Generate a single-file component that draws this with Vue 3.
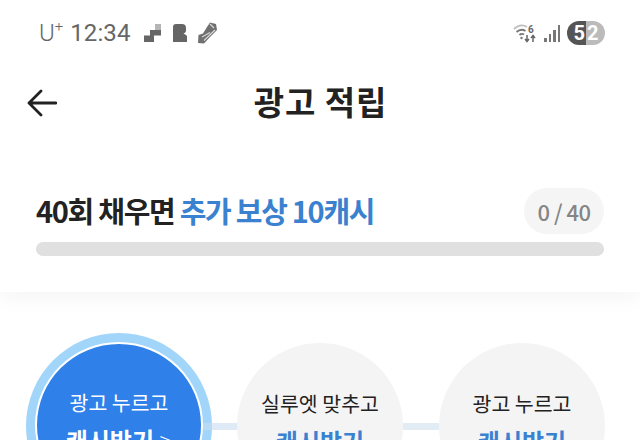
<template>
  <div class="page">
    <section class="top-card">
      <div class="status-bar">
        <div class="status-left">
          <span class="carrier">U<sup>+</sup></span>
          <span class="clock">12:34</span>
          <svg class="noti" width="18" height="18" viewBox="0 0 18 18">
            <path d="M1 18V11.500H7V6H12V0H18V11.500H11V18Z" fill="#666" />
            <path d="M12 0H18V6H12Z" fill="#b5b5b5" />
          </svg>
          <svg class="noti second" width="16" height="18" viewBox="0 0 16 18">
            <path d="M1 18V3Q1 0 4 0H10Q14 0 14 4V7Q14 8.500 11.500 9.500Q14 10.500 15 12V18Z" fill="#666" />
          </svg>
          <svg class="noti shoe" width="21" height="22" viewBox="0 0 21 22">
            <path d="M1 21L1.500 13L6 11.500L10 5L13 0.500L19 2L20 8L13 15L7 21.500Z" fill="#707070" />
            <path d="M5 15L13 10.500M7 18.500L18 8M13 2L17 6" stroke="#d5d5d5" stroke-width="1.300" fill="none" />
          </svg>
        </div>
        <div class="status-right">
          <svg width="26" height="20" viewBox="0 0 26 20" fill="none">
            <path d="M1 6Q7.500 0 14 4" stroke="#bdbdbd" stroke-width="1.800" />
            <path d="M3.500 9Q8 5 12.500 8" stroke="#777" stroke-width="1.800" />
            <path d="M6.500 12Q8.500 10 11 11.500" stroke="#777" stroke-width="1.800" />
            <circle cx="8.500" cy="15" r="1.200" fill="#777" />
            <path d="M14 12V18M12 16L14 18.500L16 16M20 19V13M18 15L20 12.500L22 15" stroke="#666" stroke-width="1.500" />
            <text x="15" y="9.500" class="wifi-six">6</text>
          </svg>
          <div class="signal">
            <span class="sig-a" />
            <span class="sig-b" />
            <span class="sig-c" />
            <span class="sig-d" />
          </div>
          <div class="battery">
            <span class="bat-on">5</span><span class="bat-off">2</span>
          </div>
        </div>
      </div>

      <header class="title-bar">
        <svg class="back" width="30" height="28" viewBox="0 0 30 28" fill="none">
          <path d="M14 2L2 14L14 26M2 14H29" stroke="#222" stroke-width="2.800" stroke-linecap="round" stroke-linejoin="round" />
        </svg>
        <h1>광고 적립</h1>
      </header>

      <div class="goal-row">
        <p class="goal-text">40회 채우면 <em>추가 보상 10캐시</em></p>
        <span class="count-pill">0 / 40</span>
      </div>
      <div class="progress-track" />
    </section>

    <section class="steps">
      <template v-for="(step, index) in steps" :key="index">
        <div class="step-line" :class="{ first: index === 1 }" v-if="index > 0" />
        <div class="step-ring" v-if="step.active">
          <div class="step active">
            <span class="step-label">{{ step.label }}</span>
            <strong>캐시받기 <i>&gt;</i></strong>
          </div>
        </div>
        <div class="step" v-else>
          <span class="step-label">{{ step.label }}</span>
          <strong>캐시받기</strong>
        </div>
      </template>
    </section>
  </div>
</template>

<script setup>
const steps = [
  { label: '광고 누르고', active: true },
  { label: '실루엣 맞추고', active: false },
  { label: '광고 누르고', active: false }
]
</script>

<style>
html, body {
  margin: 0;
  background: #fff;
}
</style>

<style scoped>
.page {
  width: 640px;
  height: 440px;
  overflow: hidden;
  background: #fff;
  font-family: "Noto Sans CJK KR", "Noto Sans", sans-serif;
}

/* top white card */
.top-card {
  position: relative;
  height: 292px;
  box-sizing: border-box;
  padding: 0 36px;
  background: #fff;
  box-shadow: 0 4px 22px rgba(0, 0, 0, 0.05);
}

.status-bar {
  height: 66px;
  margin: 0 0 0 3px;
  display: flex;
  align-items: center;
  justify-content: space-between;
}

.status-left {
  display: flex;
  align-items: center;
  font-family: Roboto, sans-serif;
  color: #666;
  font-size: 24px;
}

.carrier {
  font-size: 24px;
  font-weight: 300;
}

.carrier sup {
  font-size: 15px;
  line-height: 0;
  position: relative;
  top: -1px;
  vertical-align: super;
}

.clock {
  margin-left: 7px;
  font-weight: 400;
  letter-spacing: 0.1px;
}

.noti {
  margin-left: 12px;
}

.noti.second {
  margin-left: 11px;
}

.noti.shoe {
  margin-left: 9px;
}

.status-right {
  display: flex;
  align-items: center;
  margin-right: -1px;
}

.wifi-six {
  font-family: Roboto, sans-serif;
  font-size: 10px;
  font-weight: 700;
  fill: #666;
}

.signal {
  display: flex;
  align-items: flex-end;
  gap: 2px;
  height: 17px;
  margin-left: 5px;
}

.signal span {
  width: 2.5px;
  background: #777;
}

.sig-a { height: 4px; }
.sig-b { height: 8px; }
.sig-c { height: 12px; }
.sig-d { height: 17px; }

.battery {
  display: flex;
  width: 38px;
  height: 24px;
  margin-left: 7px;
  border-radius: 12px;
  overflow: hidden;
  font-family: Roboto, sans-serif;
  font-size: 20px;
  font-weight: 700;
  line-height: 24px;
  color: #fff;
}

.battery span {
  width: 19px;
}

.bat-on {
  background: #555;
  text-align: right;
  padding-right: 1px;
  box-sizing: border-box;
}

.bat-off {
  background: #bbb;
  text-align: left;
  padding-left: 1px;
  box-sizing: border-box;
}

/* title */
.title-bar {
  position: relative;
  height: 72px;
  display: flex;
  align-items: center;
  justify-content: center;
}

.back {
  position: absolute;
  left: -9px;
  top: 23px;
}

.title-bar h1 {
  margin: 0 0 2px 1px;
  font-size: 33px;
  font-weight: 700;
  color: #222;
  letter-spacing: 0.9px;
}

/* goal */
.goal-row {
  display: flex;
  align-items: center;
  justify-content: space-between;
  height: 46px;
  margin-top: 50px;
}

.goal-text {
  margin: 0 0 3px;
  font-size: 29px;
  font-weight: 700;
  letter-spacing: -1.300px;
  color: #222;
}

.goal-text em {
  font-style: normal;
  color: #3a82d0;
}

.count-pill {
  width: 80px;
  height: 46px;
  border-radius: 23px;
  background: #f5f5f5;
  color: #858585;
  font-size: 22px;
  font-weight: 500;
  letter-spacing: -0.5px;
  line-height: 46px;
  text-align: center;
}

.progress-track {
  height: 14px;
  margin-top: 8px;
  border-radius: 7px;
  background: #e0e0e0;
}

/* steps */
.steps {
  display: flex;
  align-items: center;
  padding: 41px 0 0 26px;
}

.step-ring {
  flex: none;
  box-sizing: border-box;
  width: 186px;
  height: 186px;
  padding: 9px;
  border-radius: 50%;
  background: #a2d5fa;
}

.step {
  flex: none;
  box-sizing: border-box;
  width: 166px;
  height: 166px;
  padding-top: 43px;
  border-radius: 50%;
  background: #f4f4f5;
  display: flex;
  flex-direction: column;
  align-items: center;
  color: #222;
}

.step.active {
  box-sizing: content-box;
  width: 164px;
  height: 121px;
  border: 2px solid #fff;
  padding-top: 41px;
  background: #2f80e8;
  color: #fff;
}

.step-label {
  font-size: 20.500px;
  line-height: 34px;
  white-space: nowrap;
}

.step strong {
  margin-top: 4px;
  font-size: 24px;
  line-height: 34px;
  font-weight: 700;
  color: #3a82d0;
}

.step strong i {
  font-style: normal;
  font-weight: 300;
}

.step.active strong {
  color: #fff;
}

.step-line {
  flex: none;
  width: 36px;
  height: 7px;
  background: #e2ecf5;
}

.step-line.first {
  position: relative;
  width: 34px;
  margin-left: -9px;
  background: rgba(200, 222, 240, 0.6);
}
</style>
